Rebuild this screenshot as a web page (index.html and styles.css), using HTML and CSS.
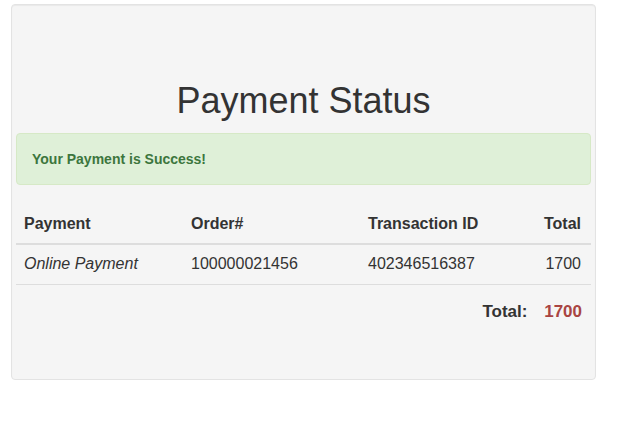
FILE: index.html
```html
<!DOCTYPE html>
<html lang="en">
<head>
<meta charset="utf-8">
<title>Payment Status</title>
<link rel="stylesheet" href="styles.css">
</head>
<body>
<div class="page">
  <div class="card">
    <h1 class="title">Payment Status</h1>
    <div class="alert">Your Payment is Success!</div>
    <table class="table">
      <thead>
        <tr>
          <th class="c1">Payment</th>
          <th class="c2">Order#</th>
          <th class="c3">Transaction ID</th>
          <th class="c4">Total</th>
        </tr>
      </thead>
      <tbody>
        <tr>
          <td><em>Online Payment</em></td>
          <td>100000021456</td>
          <td>402346516387</td>
          <td class="num">1700</td>
        </tr>
      </tbody>
    </table>
    <div class="grand">
      <span class="grand-label">Total:</span>
      <span class="grand-value">1700</span>
    </div>
  </div>
</div>
</body>
</html>
```

FILE: styles.css
```css
html, body {
  margin: 0;
  padding: 0;
  background: #ffffff;
}

body {
  font-family: "Liberation Sans", Arial, Helvetica, sans-serif;
  font-size: 14px;
  line-height: 1.42857;
  color: #333333;
}

.page {
  padding: 4px 0 0 11px;
}

.card {
  box-sizing: border-box;
  width: 585px;
  height: 376px;
  padding: 4px;
  background: #f5f5f5;
  border: 1px solid #e3e3e3;
  border-radius: 4px;
  box-shadow: inset 0 1px 1px rgba(0, 0, 0, 0.05);
}

.title {
  margin: 72px 0 12px;
  font-size: 36px;
  font-weight: 400;
  line-height: 1.1;
  text-align: center;
  color: #333333;
}

.alert {
  padding: 15px;
  margin-bottom: 20px;
  line-height: 20px;
  font-size: 14px;
  font-weight: 700;
  color: #3c763d;
  background: #dff0d8;
  border: 1px solid #d6e9c6;
  border-radius: 4px;
}

.table {
  width: 100%;
  border-collapse: separate;
  border-spacing: 0;
  table-layout: fixed;
  font-size: 16px;
  line-height: 1.42857;
}

.table th,
.table td {
  padding: 8px;
  text-align: left;
  vertical-align: bottom;
}

.table th {
  font-weight: 700;
  border-bottom: 2px solid #dddddd;
}

.table td {
  border-bottom: 1px solid #dddddd;
}

.table .c1 { width: 151px; }
.table .c2 { width: 161px; }
.table .c3 { width: 144px; }

.table .c4,
.table .num {
  text-align: right;
  padding-right: 10px;
}

.grand {
  margin-top: 15px;
  padding-right: 9px;
  text-align: right;
  font-size: 17px;
  font-weight: 700;
  line-height: 24px;
}

.grand-value {
  margin-left: 12px;
  color: #a94442;
}
```
